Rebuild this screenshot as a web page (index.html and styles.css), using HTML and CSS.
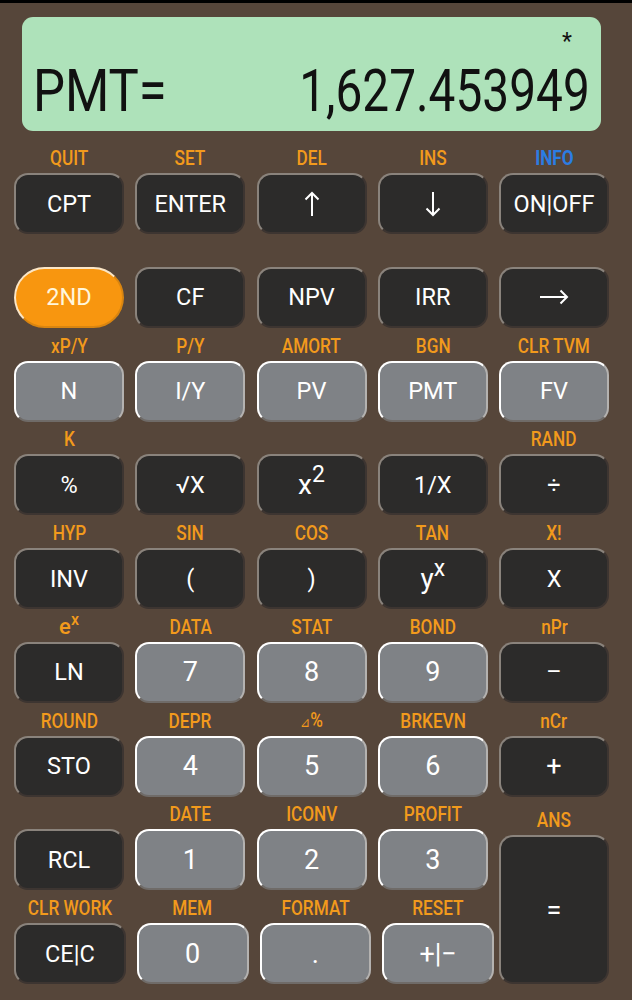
FILE: index.html
```html
<!DOCTYPE html>
<html>
<head>
<meta charset="utf-8">
<link rel="stylesheet" href="styles.css">
</head>
<body>
<div class="topbar"></div>
<div class="display">
  <div class="star-row"><span class="star">*</span></div>
  <div class="main-row">
    <span class="lcd lcd-left">PMT=</span>
    <span class="lcd lcd-right">1,627.453949</span>
  </div>
</div>
<div class="keypad">
  <div class="cell"><div class="lbl"><span>QUIT</span></div><div class="key dark">CPT</div></div>
  <div class="cell"><div class="lbl"><span>SET</span></div><div class="key dark">ENTER</div></div>
  <div class="cell"><div class="lbl"><span>DEL</span></div><div class="key dark"><svg width="16" height="26" viewBox="0 0 16 26"><path d="M8 25V2M1.5 8.5L8 2l6.5 6.5" fill="none" stroke="#fff" stroke-width="2"/></svg></div></div>
  <div class="cell"><div class="lbl"><span>INS</span></div><div class="key dark"><svg width="16" height="26" viewBox="0 0 16 26"><path d="M8 1v23M1.5 17.5L8 24l6.5-6.5" fill="none" stroke="#fff" stroke-width="2"/></svg></div></div>
  <div class="cell"><div class="lbl"><span class="info">INFO</span></div><div class="key dark">ON|OFF</div></div>

  <div class="cell"><div class="lbl"></div><div class="key orange">2ND</div></div>
  <div class="cell"><div class="lbl"></div><div class="key dark">CF</div></div>
  <div class="cell"><div class="lbl"></div><div class="key dark">NPV</div></div>
  <div class="cell"><div class="lbl"></div><div class="key dark">IRR</div></div>
  <div class="cell"><div class="lbl"></div><div class="key dark"><svg width="30" height="16" viewBox="0 0 30 16"><path d="M1 8h27M21.5 1.5L28 8l-6.5 6.5" fill="none" stroke="#fff" stroke-width="2"/></svg></div></div>

  <div class="cell"><div class="lbl"><span>xP/Y</span></div><div class="key grey">N</div></div>
  <div class="cell"><div class="lbl"><span>P/Y</span></div><div class="key grey">I/Y</div></div>
  <div class="cell"><div class="lbl"><span>AMORT</span></div><div class="key grey">PV</div></div>
  <div class="cell"><div class="lbl"><span>BGN</span></div><div class="key grey">PMT</div></div>
  <div class="cell"><div class="lbl"><span>CLR TVM</span></div><div class="key grey">FV</div></div>

  <div class="cell"><div class="lbl"><span>K</span></div><div class="key dark">%</div></div>
  <div class="cell"><div class="lbl"></div><div class="key dark">√X</div></div>
  <div class="cell"><div class="lbl"></div><div class="key dark big"><span>x<sup class="sup">2</sup></span></div></div>
  <div class="cell"><div class="lbl"></div><div class="key dark">1/X</div></div>
  <div class="cell"><div class="lbl"><span>RAND</span></div><div class="key dark">÷</div></div>

  <div class="cell"><div class="lbl"><span>HYP</span></div><div class="key dark">INV</div></div>
  <div class="cell"><div class="lbl"><span>SIN</span></div><div class="key dark">(</div></div>
  <div class="cell"><div class="lbl"><span>COS</span></div><div class="key dark">)</div></div>
  <div class="cell"><div class="lbl"><span>TAN</span></div><div class="key dark big"><span>y<sup class="sup">x</sup></span></div></div>
  <div class="cell"><div class="lbl"><span>X!</span></div><div class="key dark">X</div></div>

  <div class="cell"><div class="lbl"><span class="ex">e<sup class="lsup">x</sup></span></div><div class="key dark">LN</div></div>
  <div class="cell"><div class="lbl"><span>DATA</span></div><div class="key grey digit">7</div></div>
  <div class="cell"><div class="lbl"><span>STAT</span></div><div class="key grey digit">8</div></div>
  <div class="cell"><div class="lbl"><span>BOND</span></div><div class="key grey digit">9</div></div>
  <div class="cell"><div class="lbl"><span>nPr</span></div><div class="key dark">–</div></div>

  <div class="cell"><div class="lbl"><span>ROUND</span></div><div class="key dark">STO</div></div>
  <div class="cell"><div class="lbl"><span>DEPR</span></div><div class="key grey digit">4</div></div>
  <div class="cell"><div class="lbl"><span><span class="tri">⊿</span>%</span></div><div class="key grey digit">5</div></div>
  <div class="cell"><div class="lbl"><span>BRKEVN</span></div><div class="key grey digit">6</div></div>
  <div class="cell"><div class="lbl"><span>nCr</span></div><div class="key dark digit">+</div></div>

  <div class="cell"><div class="lbl"></div><div class="key dark">RCL</div></div>
  <div class="cell"><div class="lbl"><span>DATE</span></div><div class="key grey digit">1</div></div>
  <div class="cell"><div class="lbl"><span>ICONV</span></div><div class="key grey digit">2</div></div>
  <div class="cell"><div class="lbl"><span>PROFIT</span></div><div class="key grey digit">3</div></div>
  <div class="cell tall"><div class="lbl"><span>ANS</span></div><div class="key dark digit">=</div></div>

  <div class="bottom-row">
    <div class="cell"><div class="lbl"><span>CLR WORK</span></div><div class="key dark">CE|C</div></div>
    <div class="cell"><div class="lbl"><span>MEM</span></div><div class="key grey digit">0</div></div>
    <div class="cell"><div class="lbl"><span>FORMAT</span></div><div class="key grey digit">.</div></div>
    <div class="cell"><div class="lbl"><span>RESET</span></div><div class="key grey digit">+|−</div></div>
  </div>
</div>
</body>
</html>
```
FILE: styles.css
```css
html, body {
  margin: 0;
  padding: 0;
}
body {
  width: 632px;
  height: 1000px;
  overflow: hidden;
  background: #56463a;
  font-family: Roboto, "Liberation Sans", sans-serif;
}
.topbar {
  height: 3px;
  background: #000;
}
.display {
  margin: 14px 31px 0 22px;
  height: 114px;
  box-sizing: border-box;
  background: #aee2ba;
  border-radius: 11px;
  padding: 15.5px 11px 11px 11px;
  display: flex;
  flex-direction: column;
}
.star-row {
  display: flex;
  justify-content: flex-end;
  height: 18px;
  padding-right: 18px;
}
.star {
  font-size: 23px;
  line-height: 18px;
  color: #111;
}
.main-row {
  margin-top: auto;
  display: flex;
  justify-content: space-between;
  align-items: flex-end;
}
.lcd {
  display: inline-block;
  font-size: 59px;
  line-height: 59px;
  color: #111;
}
.lcd-left {
  transform: scaleX(0.86);
  transform-origin: left center;
}
.lcd-right {
  transform: scaleX(0.81);
  transform-origin: right center;
}
.keypad {
  margin-top: 16px;
  padding-left: 14px;
  display: grid;
  grid-template-columns: repeat(5, 110px);
  grid-auto-rows: 87px;
  column-gap: 11.25px;
  row-gap: 6.75px;
}
.cell {
  display: flex;
  flex-direction: column;
}
.lbl {
  height: 26px;
  box-sizing: border-box;
  padding-bottom: 4px;
  display: flex;
  justify-content: center;
  align-items: center;
  color: #f29a1c;
  font-size: 20px;
  font-weight: 500;
  line-height: 22px;
  white-space: nowrap;
}
.lbl > span {
  display: inline-block;
  transform: scaleX(0.86);
}
.lbl .info {
  color: #2b7de3;
  font-weight: 700;
}
.lbl > span.ex {
  font-size: 22px;
  transform: none;
}
.lsup {
  font-size: 16px;
  vertical-align: 9px;
  line-height: 0;
}
.tri {
  font-size: 14px;
}
.key {
  height: 61px;
  box-sizing: border-box;
  border-radius: 14px;
  display: flex;
  align-items: center;
  justify-content: center;
  color: #fff;
  font-size: 23.5px;
  border-style: solid;
  border-width: 2px;
}
.key.dark {
  background: #2c2b2a;
  border-color: #8a837c #3d3531 #3d3531 #8a837c;
}
.key.grey {
  background: #7f8286;
  border-width: 2.5px 2px 2px 2.5px;
  border-color: #ffffff #b4b2b0 #6f6b68 #ffffff;
}
.key.orange {
  background: #f8960f;
  border-color: #fbe6c6 #d98510 #d98510 #fbe6c6;
  border-radius: 31px;
  color: #fff6dc;
}
.key.digit {
  font-size: 27px;
}
.key.big {
  font-size: 28px;
}
.sup {
  font-size: 23px;
  vertical-align: 12px;
  line-height: 0;
}
.cell.tall {
  grid-row: span 2;
  padding-top: 6px;
}
.cell.tall .key {
  flex: 1;
  height: auto;
}
.bottom-row {
  grid-column: 1 / span 4;
  width: 480px;
  display: flex;
  justify-content: space-between;
}
.bottom-row .cell {
  width: 111.75px;
}
```
